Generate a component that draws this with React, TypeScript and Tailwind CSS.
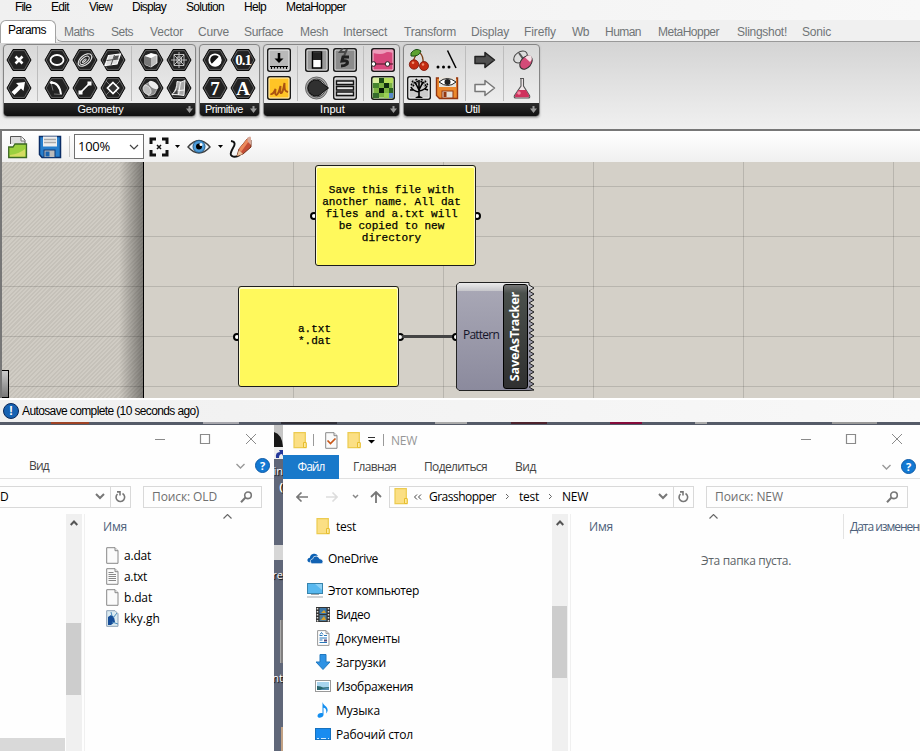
import { useLayoutEffect, useRef, type ReactNode } from "react";

/* Text run whose letter spacing is adjusted so that it takes the given width. */
function Fit({ w, children, className = "" }: { w: number; children: string; className?: string }) {
  const ref = useRef<HTMLSpanElement>(null);
  useLayoutEffect(() => {
    const el = ref.current;
    if (!el) return;
    el.style.letterSpacing = "0px";
    const natural = el.getBoundingClientRect().width;
    el.style.letterSpacing = `${(w - natural) / children.length}px`;
  }, [w, children]);
  return (
    <span ref={ref} className={`inline-block shrink-0 whitespace-pre ${className}`}>
      {children}
    </span>
  );
}

const menu: [string, number][] = [
  ["File", 16], ["Edit", 18], ["View", 23], ["Display", 34], ["Solution", 38], ["Help", 22], ["MetaHopper", 60],
];

const tabs: [string, number, string][] = [
  ["Maths", 30, "ml-2"], ["Sets", 22, "ml-[17px]"], ["Vector", 33, "ml-[17px]"], ["Curve", 31, "ml-[15px]"],
  ["Surface", 39, "ml-[15px]"], ["Mesh", 28, "ml-[17px]"], ["Intersect", 44, "ml-[15px]"],
  ["Transform", 52, "ml-[17px]"], ["Display", 38, "ml-[15px]"], ["Firefly", 32, "ml-[15px]"],
  ["Wb", 17, "ml-4"], ["Human", 36, "ml-4"], ["MetaHopper", 61, "ml-[17px]"], ["Slingshot!", 50, "ml-[18px]"],
  ["Sonic", 29, "ml-[15px]"],
];

function Hex({ children }: { children?: ReactNode }) {
  return (
    <svg width="26" height="24" viewBox="0 0 26 24">
      <path d="M7 1.500h12L25 12l-6 10.500H7L1 12z" fill="#222" stroke="#0a0a0a" strokeWidth="1" />
      <path d="M7.600 2.600h10.800L23.800 12l-5.400 9.400H7.600L2.200 12z" fill="none" stroke="#777" strokeWidth=".7" />
      {children}
    </svg>
  );
}

function Tile({ fill = "#b9b9b9", children }: { fill?: string; children?: ReactNode }) {
  return (
    <svg width="24" height="24" viewBox="0 0 24 24">
      <rect x=".75" y=".75" width="22.500" height="22.500" rx="2" fill={fill} stroke="#1a1a1a" strokeWidth="1.500" />
      <rect x="2" y="2" width="20" height="20" rx="1" fill="none" stroke="#fff" strokeOpacity=".7" strokeWidth="1" />
      {children}
    </svg>
  );
}

const hexCross = <Hex><path d="M9.500 8.500l7 7m0-7l-7 7" stroke="#fff" strokeWidth="2.600" /></Hex>;
const hexArrow = <Hex><path d="M7 17.500l-1.500-1.500 7-6.500-2.500-2.500 9-1-1.500 9-2.500-2.500-6.500 6.500z" fill="#fff" /></Hex>;
const hexCircle = <Hex><ellipse cx="13" cy="12" rx="6.500" ry="5" fill="none" stroke="#fff" strokeWidth="1.800" /></Hex>;
const hexArc = <Hex><path d="M7 6.500c5 0 9 4 10 12" fill="none" stroke="#fff" strokeWidth="2" /><path d="M7 6.500l2 8M10 18l7 .5" stroke="#888" strokeWidth=".8" /><circle cx="7.500" cy="6.500" r="1.500" fill="#fff" /></Hex>;
const hexSpiral = (
  <Hex>
    <g transform="rotate(-40 13 12)" fill="none" stroke="#ddd">
      <ellipse cx="13" cy="12" rx="8" ry="4.600" strokeWidth="1.200" />
      <ellipse cx="12.500" cy="12" rx="5.500" ry="2.700" strokeWidth="1" />
      <ellipse cx="12" cy="12" rx="2.500" ry=".8" />
    </g>
  </Hex>
);
const hexLine = <Hex><path d="M9 16l8-8" stroke="#fff" strokeWidth="1.700" /><rect x="6.500" y="14.500" width="4" height="4" fill="#fff" /><rect x="15.500" y="5.500" width="4" height="4" fill="#fff" /></Hex>;
const hexPlane = <Hex><path d="M8.500 7.500l12-1.500-3.500 10-12 1.500z" fill="#ddd" stroke="#fff" strokeWidth="1.200" /><path d="M6.500 12.500l12-1.500M14.500 7l-3.500 10" stroke="#555" strokeWidth="1" /><path d="M14.500 8l4.500-.6-1.200 3.400-4.600.6z" fill="#555" /></Hex>;
const hexRect = <Hex><path d="M6 5l14 14M20 5L6 19" stroke="#888" strokeWidth=".9" /><path d="M13 6.500l5.500 5.500-5.500 5.500L7.500 12z" fill="#333" stroke="#fff" strokeWidth="1.700" /></Hex>;
const hexBox = <Hex><path d="M7 8l6-2.500 6 1.500v8l-6 4-6-2.500z" fill="#bbb" stroke="#fff" strokeWidth=".8" /><path d="M7 8l6 2v9l-6-2.500z" fill="#777" /><path d="M7 8l6-2.500 6 1.500-6 3z" fill="#fff" /></Hex>;
const hexMesh = <Hex><path d="M13 4v16M5 12h16M8 7l10 10M18 7L8 17M8 6.500h10v11H8zM11 9h4.500v6H11z" fill="none" stroke="#ccc" strokeWidth=".9" /></Hex>;
const hexCylinder = <Hex><path d="M6 9.500l7-4.500 7 6-3.500 7-6 2z" fill="#888" stroke="#ddd" strokeWidth=".7" /><ellipse cx="15.500" cy="9" rx="5.500" ry="3" transform="rotate(35 15.500 9)" fill="#eee" /><ellipse cx="9" cy="14" rx="3.500" ry="5" transform="rotate(-35 9 14)" fill="#bbb" stroke="#fff" strokeWidth=".6" /></Hex>;
const hexSurface = <Hex><path d="M11 5.500q4 1.500 8-1l-1 15q-6-1-12-1 5-5 5-13z" fill="#aaa" stroke="#fff" strokeWidth=".9" /><path d="M9 14q5 1 9.500 0M14.500 6l-2 13" stroke="#fff" strokeWidth=".9" fill="none" /><path d="M7 18q4-3 4.500-7v7z" fill="#444" /></Hex>;
const hexBool = <Hex><circle cx="13" cy="12" r="5.700" fill="#111" stroke="#fff" strokeWidth="1.800" /><path d="M17.500 8a6 6 0 01-8.700 8.700z" fill="#fff" /></Hex>;

function HexText({ children, small }: { children: string; small?: boolean }) {
  return (
    <div className="grid place-items-center">
      <div className="col-start-1 row-start-1"><Hex /></div>
      <span
        className={`z-10 col-start-1 row-start-1 font-['Liberation_Serif',serif] font-bold leading-none text-white ${small ? "text-[15px] tracking-[-1px]" : "text-[19px]"}`}
      >
        {children}
      </span>
    </div>
  );
}

const tImport = <Tile><path d="M12 5v6" stroke="#000" strokeWidth="2.500" /><path d="M7.500 10.500h9L12 15z" fill="#000" /><path d="M3 18.500h18M4.500 18v3M7.500 18v2.500M10.500 18v2.500M13.500 18v2.500M16.500 18v2.500M19.500 18v3" stroke="#000" strokeWidth="1" /></Tile>;
const tGraph = <Tile fill="#ffc426"><path d="M3.500 18c3 1 4-3 5-5 0 3-1 6 1 6 2-1 3-5 4-9 0 4-1 8 1 7 2-2 2-6 3-10 0 5-.5 8 3.500 9" fill="none" stroke="#aa5312" strokeWidth="1.900" /></Tile>;
const tToggle = <Tile fill="#999"><rect x="7.500" y="4" width="9" height="16" fill="#fff" stroke="#000" strokeWidth="1.500" /><rect x="8" y="4.500" width="8" height="7.500" fill="#222" /></Tile>;
const tKnob = (
  <svg width="26" height="24" viewBox="0 0 26 24">
    <circle cx="12.500" cy="12" r="11" fill="#aaa" stroke="#666" />
    <circle cx="12.500" cy="12" r="9" fill="#ccc" stroke="#444" />
    <path d="M24.500 12l-5.500 4a8 8 0 110-8z" fill="#303030" stroke="#111" />
  </svg>
);
const tScroller = <Tile fill="#8c8c8c"><path d="M10 0l-3 4h6M14 1l-3 7" fill="none" stroke="#4a4a4a" strokeWidth="2" /><path d="M16 9H10l-1 4q7-1 5 3-2 2-6 2" fill="none" stroke="#202020" strokeWidth="3" /></Tile>;
const tPanel = <Tile fill="#bdbdbd"><path d="M3.500 5h17v3.500h-17zM3.500 10.500h17V14h-17zM3.500 16h17v3.500h-17z" fill="#e5e5e5" stroke="#111" strokeWidth="1.400" /></Tile>;
const tGradient = <Tile fill="#d8487c"><path d="M2 2h20v3q-6-2-8 0-4 2-12 0z" fill="#ed9cba" /><path d="M2 16h20" stroke="#461525" strokeWidth="1.200" /><circle cx="2.500" cy="16" r="2.300" fill="#fff" stroke="#222" /><circle cx="16.500" cy="16" r="2.300" fill="#fff" stroke="#222" /></Tile>;
const tPixels = (
  <Tile fill="#7bb342">
    <rect x="2" y="2" width="6" height="5" fill="#d9efa0" />
    <rect x="8" y="2" width="5" height="5" fill="#1d4c16" />
    <rect x="13" y="2" width="9" height="5" fill="#b6df5c" />
    <rect x="2" y="7" width="6" height="5" fill="#46852f" />
    <rect x="13" y="7" width="5" height="5" fill="#102f10" />
    <rect x="8" y="12" width="5" height="5" fill="#061906" />
    <rect x="18" y="12" width="4" height="5" fill="#2b671f" />
    <rect x="2" y="17" width="6" height="5" fill="#356b2c" />
    <rect x="13" y="17" width="5" height="5" fill="#9cd155" />
    <rect x="18" y="17" width="4" height="5" fill="#5888c8" />
  </Tile>
);
const uCherry = (
  <svg width="24" height="24" viewBox="0 0 24 24">
    <path d="M6 15Q7 8 12 4q5 4 4 12" fill="none" stroke="#7b3f16" strokeWidth="1.300" />
    <path d="M4 5q5-6 10-2-2 6-10 5z" fill="#5ca231" stroke="#184c13" />
    <circle cx="7" cy="16.500" r="4.700" fill="#c42c13" stroke="#761408" strokeWidth=".8" /><circle cx="17" cy="18" r="4.500" fill="#c42c13" stroke="#761408" strokeWidth=".8" />
    <circle cx="6" cy="14.800" r="1.300" fill="#f09070" /><circle cx="16" cy="16.500" r="1.200" fill="#f09070" />
  </svg>
);
const uDots = <svg width="24" height="24" viewBox="0 0 24 24"><circle cx="3" cy="19" r="1.500" /><circle cx="8.500" cy="19" r="1.500" /><circle cx="14" cy="19" r="1.500" /><path d="M12.500 2.500L21 20" stroke="#000" strokeWidth="1.500" /></svg>;
const uTree = (
  <Tile fill="#ccc">
    <path d="M12 22v-8M12 16Q6 15 4 11M12 15q6-1 8-5M12 14L8 6M12 14l4-8M12 14V4M6 14L3 14M18 13l3 1" fill="none" stroke="#000" strokeWidth="1.600" />
    <path d="M4 8l3 2M5 5l4 3M9 3l2 4M15 3l-1 4M19 5l-4 3M21 8l-4 2" stroke="#000" strokeWidth="2" strokeDasharray="1.500 .6" />
    <path d="M8 22q4-4 8 0z" />
  </Tile>
);
const uEyeDisk = (
  <svg width="24" height="24" viewBox="0 0 24 24">
    <path d="M1.500 2h21v20.500h-18l-3-3z" fill="#ec892d" stroke="#943611" strokeWidth="1.400" />
    <rect x="4" y="1" width="17" height="10" fill="#e8e4de" /><path d="M4 6q8-7 17 0-8 7-17 0z" fill="#fff" stroke="#222" /><circle cx="12.500" cy="6" r="3" fill="#222" />
    <rect x="7" y="15" width="11" height="7" fill="#e5ded7" stroke="#943611" /><rect x="8.500" y="16" width="3" height="5" fill="#943611" />
  </svg>
);
const uArrow = (fill: string, stroke: string) => (
  <svg width="24" height="24" viewBox="0 0 24 24"><path d="M2 8.500h10V4.500l9.500 7.500-9.500 7.500v-4H2z" fill={fill} stroke={stroke} strokeWidth="1.500" strokeLinejoin="round" /></svg>
);
const uPills = (
  <svg width="24" height="24" viewBox="0 0 24 24">
    <ellipse cx="9.500" cy="9" rx="7.500" ry="5" transform="rotate(-35 9.500 9)" fill="#ddd" stroke="#444" />
    <path d="M8 5l5 7" stroke="#555" strokeWidth="2" />
    <ellipse cx="15" cy="14.500" rx="7.500" ry="5.200" transform="rotate(-50 15 14.500)" fill="#d34b78" stroke="#333" />
    <path d="M14 9.500q4-4 6.500-1 1 3-1.500 5.500z" fill="#f7dfe5" />
  </svg>
);
const uFlask = (
  <svg width="24" height="24" viewBox="0 0 24 24">
    <path d="M9 2.500h4M10 3v7L3.500 19.500q-1 2.500 1.500 2.500h12q2.500 0 1.500-2.500L12.500 10V3" fill="#f1e7e9" stroke="#555" strokeWidth="1.100" />
    <path d="M7.500 14h7.500l3 5.500q.5 1.700-1 1.700H5q-1.700 0-1-1.700z" fill="#cf315d" /><circle cx="8" cy="17" r="1.800" fill="#f48aa3" />
  </svg>
);

type Pair = [ReactNode, ReactNode];
const groups: { name: string; w: number; cols: (Pair | null)[]; cls: string }[] = [
  {
    name: "Geometry", w: 46, cls: "w-[193px]",
    cols: [[hexCross, hexArrow], null, [hexCircle, hexArc], [hexSpiral, hexLine], [hexPlane, hexRect], null, [hexBox, hexCylinder], [hexMesh, hexSurface]],
  },
  {
    name: "Primitive", w: 38, cls: "w-[61px]",
    cols: [[hexBool, <HexText>7</HexText>], [<HexText small>0.1</HexText>, <HexText>A</HexText>]],
  },
  { name: "Input", w: 25, cls: "w-[137px]", cols: [[tImport, tGraph], null, [tToggle, tKnob], [tScroller, tPanel], null, [tGradient, tPixels]] },
  {
    name: "Util", w: 15, cls: "w-[137px]",
    cols: [[uCherry, uTree], [uDots, uEyeDisk], null, [uArrow("#505050", "#222"), uArrow("#f4f4f4", "#777")], null, [uPills, uFlask]],
  },
];

function Ribbon() {
  return (
    <div className="flex h-[87px] gap-[3px] bg-linear-to-b from-[#d4d4d4] to-[#f0f0f0] pl-[3px] pt-0.5">
      {groups.map((g) => (
        <div key={g.name} className={`flex h-[73px] flex-col overflow-hidden rounded-[4px] border border-[#858585] bg-linear-to-b from-[#d8d8d8] to-[#f2f2f2] shadow-[0_1px_2px_#aaa] ${g.cls}`}>
          <div className="flex h-[58px] shrink-0 pl-px pt-px">
            {g.cols.map((c, i) =>
              c ? (
                <div key={i} className="w-7 shrink-0">
                  <div className="flex h-7 items-center justify-center">{c[0]}</div>
                  <div className="flex h-7 items-center justify-center">{c[1]}</div>
                </div>
              ) : (
                <div key={i} className="flex w-2.5 shrink-0 pl-1"><div className="h-[55px] w-px bg-[#bdbdbd]" /></div>
              ),
            )}
          </div>
          <div className="-mx-px flex flex-1 items-center bg-linear-to-b from-[#2c2c2c] to-[#101010] text-[11px] leading-none text-white">
            <div className={`flex flex-1 ${g.name === "Primitive" ? "pl-1.5" : "justify-center pl-3"}`}><Fit w={g.w}>{g.name}</Fit></div>
            <svg width="7" height="7" className="mr-[3px] shrink-0"><path d="M2.500 0h2v2.500H7L3.500 7 0 2.500h2.500z" fill="#999" /></svg>
          </div>
        </div>
      ))}
    </div>
  );
}

function Toolbar() {
  return (
    <div className="flex h-[31px] items-center bg-linear-to-b from-white to-[#f0f0f0]">
      <svg width="20" height="24" viewBox="0 0 20 24" className="ml-1.5">
        <path d="M2.500 9V1.500H13l4 3.500V9" fill="#ddd" stroke="#555" /><path d="M13 1.500V6h4" fill="#fff" stroke="#777" />
        <path d="M.7 12H5l2-3h11.500v13.500H.7z" fill="#9bd03f" stroke="#3d6924" strokeWidth="1.300" /><path d="M2 20q9-1 15-6v7.500H2z" fill="#d5dc62" />
      </svg>
      <svg width="24" height="24" viewBox="0 0 24 24" className="ml-2.5">
        <path d="M1.500 1.500h21v21H4l-2.500-3z" fill="#277fcd" stroke="#0b2d66" strokeWidth="1.500" />
        <rect x="5" y="1.500" width="14" height="10" fill="#eee" /><path d="M6 4.500h12M6 7.500h12" stroke="#aaa" strokeWidth="1.500" />
        <rect x="6" y="15" width="11" height="7.500" fill="#bbb" stroke="#123a75" /><rect x="7.500" y="16.500" width="4" height="5" fill="#1b64b0" />
      </svg>
      <div className="ml-[7px] h-[21px] w-px bg-[#c8c8c8]" />
      <div className="ml-1 flex h-[25px] w-[70px] items-center justify-between border border-[#707070] bg-white pl-[3px] pr-1 text-[13px]">
        <Fit w={32} className="font-['Open_Sans',sans-serif]">100%</Fit>
        <svg width="10" height="6" fill="none" stroke="#444" strokeWidth="1.200"><path d="M1 1l4 4 4-4" /></svg>
      </div>
      <svg width="20" height="20" viewBox="0 0 20 20" className="ml-[5px]">
        <path d="M2 7V2h5M13 2h5v5M18 13v5h-5M7 18H2v-5" fill="none" stroke="#111" strokeWidth="3" /><path d="M8 8l4 4m0-4l-4 4" stroke="#111" strokeWidth="1.500" />
      </svg>
      <svg width="5" height="3" className="ml-1.5"><path d="M0 0h5L2.500 3z" /></svg>
      <svg width="24" height="18" viewBox="0 0 24 18" className="ml-[7px] mt-px">
        <path d="M1 9Q12-4 23 9 12 21 1 9z" fill="#eef5fa" stroke="#3f3f3f" strokeWidth="1.400" /><circle cx="12" cy="8.500" r="6" fill="#4d9ddb" stroke="#235984" /><circle cx="12" cy="8.500" r="3" /><circle cx="14" cy="6.500" r="1.500" fill="#fff" />
      </svg>
      <svg width="5" height="3" className="ml-[7px]"><path d="M0 0h5L2.500 3z" /></svg>
      <svg width="24" height="24" viewBox="0 0 24 24" className="ml-1.5">
        <path d="M2 6q6 1 2 7-4 7-1 8 3 2 8-1" fill="none" stroke="#111" strokeWidth="1.900" />
        <path d="M10 14L19 3l3 2v7l-8 7-6 2z" fill="#c44e36" stroke="#713019" /><path d="M10 14L18 4l2 2-8 11z" fill="#ec895b" /><path d="M18 3q4-3 4 0v7l-3-3z" fill="#d8a898" /><path d="M8 21l2-6 4 4z" fill="#eac19a" />
      </svg>
    </div>
  );
}

function Port({ cls }: { cls: string }) {
  return <div className={`absolute size-2 rounded-full border-2 border-black bg-white ${cls}`} />;
}

const zigzag = Array.from({ length: 18 }, (_, i) => `L${73} ${3 + i * 6}L${78} ${6 + i * 6}`).join("");

function Canvas() {
  return (
    <div className="relative h-[236px] overflow-hidden bg-[#d4d0c8]">
      <div className="flex h-full w-[142px] border-r border-black bg-[repeating-linear-gradient(135deg,#c5c1b9_0px,#c5c1b9_1.500px,#d0ccc4_1.500px,#d0ccc4_3px)]">
        <div className="ml-auto h-full w-6 bg-linear-to-r from-transparent to-black/40" />
      </div>
      <svg className="absolute inset-0" width="918" height="236">
        <path d="M0 24.500h918M0 74.500h918M0 124.500h918M0 174.500h918M0 224.500h918M291.500 0v236M441.500 0v236M591.500 0v236M741.500 0v236M891.500 0v236" stroke="#000" strokeOpacity=".13" fill="none" />
      </svg>
      <div className="absolute -left-px top-[208px] h-7 w-2 border border-black bg-linear-to-b from-[#ccc] to-[#777]" />

      <Port cls="left-[308px] top-[50px]" />
      <Port cls="left-[471px] top-[50px]" />
      <div className="absolute left-[313px] top-[3px] h-[101px] w-[161px] rounded-[3px] border border-[#1c1c1c] bg-[#fff95c] pr-2 pt-[18px] text-center font-['Liberation_Mono',monospace] text-[11px] leading-3 text-black [-webkit-text-stroke:0.25px_#000] shadow-[inset_0_1px_0_1px_#fffcc8]">
        Save this file with<br />another name. All dat<br />files and a.txt will<br />be copied to new<br />directory
      </div>

      <Port cls="left-[231px] top-[171px]" />
      <Port cls="left-[394px] top-[171px]" />
      <div className="absolute left-[400px] top-[173px] h-[3px] w-[52px] bg-[#444]" />
      <Port cls="left-[450px] top-[171px]" />
      <div className="absolute left-[236px] top-[124px] h-[101px] w-[161px] rounded-[3px] border border-[#1c1c1c] bg-[#fff95c] pr-2 pt-9 text-center font-['Liberation_Mono',monospace] text-[11px] leading-3 text-black [-webkit-text-stroke:0.25px_#000] shadow-[inset_0_1px_0_1px_#fffcc8]">
        a.txt<br />*.dat
      </div>

      <div className="absolute left-[454px] top-[120px] flex h-[109px] w-20">
        <svg className="absolute inset-0" width="80" height="109" viewBox="0 0 80 109">
          <defs>
            <linearGradient id="comp" x1="0" y1="0" x2="0" y2="1">
              <stop offset="0" stopColor="#eee" /><stop offset=".075" stopColor="#c8c8cc" /><stop offset=".076" stopColor="#a8a7b5" /><stop offset="1" stopColor="#8b8a9d" />
            </linearGradient>
          </defs>
          <path d={`M3 .5H73${zigzag}L73 108.500H3L.5 106V3z`} fill="url(#comp)" stroke="#222" />
        </svg>
        <div className="relative flex w-12 items-center justify-end pr-[5px] pb-1 font-['Open_Sans',sans-serif] text-[12px] text-[#15152a]"><Fit w={36}>Pattern</Fit></div>
        <div className="relative ml-[-1px] mt-0.5 flex h-[105px] w-[25px] items-center justify-center rounded-[3px] border border-black bg-linear-to-b from-[#777] via-[#4a504c] via-8% to-[#303030]">
          <span className="rotate-180 whitespace-pre font-['Noto_Sans',sans-serif] text-[12.500px] font-bold leading-none tracking-[-0.1px] text-white [writing-mode:vertical-rl]">SaveAsTracker</span>
        </div>
      </div>
    </div>
  );
}

function Folder() {
  return <svg width="14" height="17" viewBox="0 0 14 17" className="shrink-0"><path d="M1 .7h11.300v11H13v4H1z" fill="#fbdf84" stroke="#eccb50" strokeWidth="1.200" /><path d="M10.500 15.500v-5h2.700v5z" fill="#fdeaa0" stroke="#e7bd2d" /></svg>;
}

function WindowButtons() {
  return (
    <svg width="102" height="12" viewBox="0 0 102 12" fill="none" stroke="#8a8a8a">
      <path d="M0 6.500h10" /><path d="M45.500 1.500h9v9h-9z" strokeWidth="1.200" /><path d="M91 1l10 10M101 1L91 11" />
    </svg>
  );
}

function RibbonEnd() {
  return (
    <div className="flex items-center gap-[10px]">
      <svg width="9" height="6" fill="none" stroke="#999" strokeWidth="1.400"><path d="M.5 1l4 4 4-4" /></svg>
      <div className="flex size-[15px] items-center justify-center rounded-full border border-[#0e5aa7] bg-[#1379d3] text-[11px] font-bold leading-none text-white">?</div>
    </div>
  );
}

function AddressEnd() {
  return (
    <div className="ml-auto flex h-full items-center">
      <svg width="10" height="7" className="mr-[5px]" fill="none" stroke="#777" strokeWidth="2"><path d="M1 1l4 4 4-4" /></svg>
      <div className="flex h-full w-5 items-center justify-center border-l border-[#d9d9d9]">
        <svg width="11" height="12" viewBox="0 0 11 12" fill="none" stroke="#777" strokeWidth="1.600"><path d="M7.500 2.500A4.300 4.300 0 112.500 3" /><path d="M2 .9h3v3.600" /></svg>
      </div>
    </div>
  );
}

function Search({ text, w, cls }: { text: string; w: number; cls: string }) {
  return (
    <div className={`flex h-[22px] items-center justify-between border border-[#d9d9d9] pl-2 pr-2 text-[#6f6f6f] ${cls}`}>
      <Fit w={w}>{text}</Fit>
      <svg width="13" height="12" viewBox="0 0 13 12" fill="none" stroke="#777" strokeWidth="1.600"><circle cx="8" cy="4.300" r="3.300" /><path d="M5.500 6.500L1 11.300" strokeWidth="2" /></svg>
    </div>
  );
}

function Scrollbar() {
  return (
    <div className="flex w-4 shrink-0 flex-col items-center bg-[#f0f0f0]">
      <svg width="8" height="6" className="mt-[6px]" fill="none" stroke="#555" strokeWidth="2"><path d="M.7 5L4 1.500 7.300 5" /></svg>
    </div>
  );
}

const sortCaret = <svg width="9" height="5" fill="none" stroke="#666" strokeWidth="1.100"><path d="M.5 4.500l4-4 4 4" /></svg>;

function Page({ lines }: { lines?: boolean }) {
  return (
    <svg width="13" height="17" viewBox="0 0 13 17"><path d="M.7.7h8.300l3 3v12.600H.7z" fill="#fbfbfb" stroke="#888" /><path d="M9 .7v3h3" fill="#eee" stroke="#888" />
      {lines && <path d="M2.500 4.500h5M2.500 6.500h7.500M2.500 8.500h7.500M2.500 10.500h7.500M2.500 12.500h7.500" stroke="#888" />}
    </svg>
  );
}
const ghFile = <svg width="13" height="17" viewBox="0 0 13 17"><path d="M.7.7h8.300l3 3v12.600H.7z" fill="#dcebf1" stroke="#8da0b5" /><path d="M2 7l3-2 3 2 1 5-4 3H2z" fill="#164d98" /><path d="M7 8l4-5M6 6L5 2M6 12l6 2" stroke="#4b8bbd" /></svg>;

function OldWindow() {
  const files: [string, number, ReactNode][] = [["a.dat", 27, <Page />], ["a.txt", 23, <Page lines />], ["b.dat", 28, <Page />], ["kky.gh", 36, ghFile]];
  return (
    <div className="flex w-[274px] shrink-0 flex-col bg-[#fefefe]">
      <div className="flex h-7 items-center justify-end pr-[17px]"><WindowButtons /></div>
      <div className="flex h-[26px] items-center justify-between border-b border-[#e1e1e1] pl-[29px] pr-1 text-[#444]"><Fit w={20}>Вид</Fit><RibbonEnd /></div>
      <div className="flex h-[35px] items-center">
        <div className="flex h-[22px] w-[131px] items-center border border-l-0 border-[#d9d9d9]"><Fit w={8}>D</Fit><AddressEnd /></div>
        <Search text="Поиск: OLD" w={65} cls="ml-3 w-[119px]" />
      </div>
      <div className="flex flex-1">
        <div className="flex w-[66px] items-end"><div className="h-[13px] w-[65px] bg-[#d9d9d9]" /></div>
        <div className="grid">
          <div className="col-start-1 row-start-1 flex"><Scrollbar /></div>
          <div className="z-10 col-start-1 row-start-1 mt-[109px] h-[72px] w-[15px] bg-[#cdcdcd]" />
        </div>
        <div className="ml-0.5 flex-1 border-l border-[#f0f0f0]">
          <div className="flex h-[25px] pl-[18px] text-[#4c607a]"><div className="flex items-center"><Fit w={24}>Имя</Fit></div><div className="ml-24">{sortCaret}</div></div>
          <div className="flex flex-col pl-[21px] pt-1.5">
            {files.map(([n, w, icon]) => <div key={n} className="flex h-[21px] items-center gap-[5px]">{icon}<Fit w={w}>{n}</Fit></div>)}
          </div>
        </div>
      </div>
    </div>
  );
}

const oneDrive = <svg width="17" height="11" viewBox="0 0 17 11"><path d="M3.500 9.500Q0 9.500.5 6.500 1 5 3 4.700 3.500 1 7 .5q3-.5 4.500 2" fill="#0c61b4" /><path d="M6 11Q3 11 3.500 8q.5-2 2.500-2 .5-3.500 4-3 2.500.2 3.300 2.700Q17 6 17 9q0 2-2 2z" fill="#1262b3" stroke="#fff" strokeWidth=".7" /></svg>;
const computer = <svg width="16" height="16" viewBox="0 0 16 16"><rect x=".5" y="1.500" width="15" height="10" fill="#58b8ef" stroke="#3884ac" /><path d="M8 2h7v6z" fill="#8ed1f5" /><path d="M4 12.500h8M0 15h16" stroke="#a3a7ab" /></svg>;
const video = <svg width="14" height="15" viewBox="0 0 14 15"><rect width="14" height="15" fill="#333" /><path d="M1.500 1v14M12.500 1v14" stroke="#ddd" strokeWidth="1.500" strokeDasharray="1.500 1.500" /><rect x="3.500" y="1" width="7" height="6" fill="#3c77a8" /><rect x="3.500" y="8" width="7" height="6" fill="#4f7c9a" /><path d="M5 6l3-3 2 3zM5 13l3-4 2 4z" fill="#d8a02a" /></svg>;
const docs = <svg width="13" height="16" viewBox="0 0 13 16"><path d="M.6.6H9l3 3v11.800H.6z" fill="#fff" stroke="#999" /><path d="M9 .6v3h3" fill="none" stroke="#999" /><path d="M2.500 5.500h3M7 5.500h3M2.500 8h7.500M2.500 10h3M2.500 12.500h7.500" stroke="#2777b9" /><path d="M3 4.500l1.500-2 1.500 2" stroke="#2777b9" fill="none" /><rect x="7" y="9.500" width="3" height="2" fill="#547" /></svg>;
const download = <svg width="16" height="16" viewBox="0 0 16 16"><path d="M5 .5h6V8h4l-7 7.500L1 8h4z" fill="#2e92e4" stroke="#2178bf" /></svg>;
const picture = <svg width="16" height="12" viewBox="0 0 16 12"><rect x=".5" y=".5" width="15" height="11" fill="#fff" stroke="#999" /><rect x="2" y="2" width="12" height="8" fill="#a8d4ee" /><path d="M2 6q4 0 6 1.500l6-.5v3H2z" fill="#28666d" /><path d="M7 9l7-1.500V10H5z" fill="#518cb1" /></svg>;
const music = <svg width="12" height="16" viewBox="0 0 12 16"><path d="M5.500 0c1 4 6 4.500 5 9-.5 1.500-1 2-1.500 2.500 1-3.500-.5-5.500-2.500-5.800V13c-.5 3-6 4-6 1 0-2.500 3-3.500 5-2.700z" fill="#138ef0" /></svg>;
const desktop = <svg width="16" height="12" viewBox="0 0 16 12"><rect x=".5" y=".5" width="15" height="11" fill="#198cf0" stroke="#1771bd" /><path d="M2 10.500h2m9 0h1M6 10.500h5" stroke="#d2ebff" /></svg>;

function NewWindow() {
  const tree: [string, number, ReactNode, number][] = [
    ["test", 20, <Folder />, 1], ["OneDrive", 50, oneDrive, 0], ["Этот компьютер", 91, computer, 0],
    ["Видео", 34, video, 1], ["Документы", 64, docs, 1], ["Загрузки", 50, download, 1],
    ["Изображения", 77, picture, 1], ["Музыка", 44, music, 1], ["Рабочий стол", 77, desktop, 1],
  ];
  return (
    <div className="flex min-w-0 flex-1 flex-col bg-[#fefefe]">
      <div className="flex h-[30px] items-center justify-between pl-2.5 pr-[17px]">
        <div className="flex items-center">
          <Folder /><div className="ml-[6px] h-3 w-px bg-[#999]" />
          <svg width="13" height="17" viewBox="0 0 13 17" className="ml-[11px]"><path d="M.7.7h8.300l3 3v12.600H.7z" fill="#fafafa" stroke="#888" /><path d="M9 .7v3h3" fill="#eee" stroke="#888" /><path d="M2.500 8.500l3 3 5-5" fill="none" stroke="#c95719" strokeWidth="1.700" /></svg>
          <div className="ml-[9px] flex"><Folder /></div>
          <svg width="7" height="7" className="ml-[7px]"><path d="M0 .5h7" stroke="#333" /><path d="M0 3h7L3.500 6.500z" /></svg>
          <div className="ml-2 h-3 w-px bg-[#999]" />
          <Fit w={26} className="ml-[7px] text-[#969696]">NEW</Fit>
        </div>
        <div className="flex pb-0.5"><WindowButtons /></div>
      </div>
      <div className="flex h-6 items-center border-b border-[#e1e1e1] pr-1 text-[#444]">
        <div className="flex h-6 w-14 items-center justify-center bg-[#1979ca] text-white"><Fit w={27}>Файл</Fit></div>
        <Fit w={43} className="ml-[14px]">Главная</Fit><Fit w={63} className="ml-[28px]">Поделиться</Fit><Fit w={21} className="ml-[28px]">Вид</Fit>
        <div className="ml-auto"><RibbonEnd /></div>
      </div>
      <div className="flex h-[35px] items-center pl-[13px]">
        <svg width="12" height="10" fill="none" stroke="#777" strokeWidth="1.600"><path d="M5.500.5L1 5l4.500 4.500M1 5h11" /></svg>
        <svg width="12" height="10" className="ml-[18px]" fill="none" stroke="#ddd" strokeWidth="1.600"><path d="M6.500.5L11 5 6.500 9.500M0 5h11" /></svg>
        <svg width="7" height="5" className="ml-[14px]" fill="none" stroke="#888" strokeWidth="1.500"><path d="M1 1l2.500 2.500L6 1" /></svg>
        <svg width="12" height="12" className="ml-[11px]" fill="none" stroke="#777" strokeWidth="1.800"><path d="M1 6l5-5 5 5M6 1v11" /></svg>
        <div className="ml-[7px] flex h-[22px] w-[305px] items-center border border-[#d9d9d9] pl-1">
          <Folder />
          <svg width="9" height="6" className="ml-[5px]" fill="none" stroke="#444"><path d="M4 .5L1.500 3 4 5.500M8 .5L5.500 3 8 5.500" /></svg>
          <Fit w={67} className="ml-[7px]">Grasshopper</Fit>
          <svg width="5" height="7" className="ml-[9px]" fill="none" stroke="#666"><path d="M1 1l2.500 2.500L1 6" /></svg>
          <Fit w={20} className="ml-[9px]">test</Fit>
          <svg width="5" height="7" className="ml-[9px]" fill="none" stroke="#666"><path d="M1 1l2.500 2.500L1 6" /></svg>
          <Fit w={26} className="ml-[9px]">NEW</Fit>
          <AddressEnd />
        </div>
        <Search text="Поиск: NEW" w={68} cls="ml-3 w-[202px]" />
      </div>
      <div className="flex flex-1">
        <div className="w-[269px] shrink-0">
          {tree.map(([n, w, icon, depth], i) => (
            <div key={n} className={`flex h-6 items-center gap-[5px] ${depth ? "pl-8" : "pl-6"} ${i === 1 || i === 2 ? "mt-2" : ""}`}>
              <div className="flex w-4 justify-center">{icon}</div><Fit w={w}>{n}</Fit>
            </div>
          ))}
        </div>
        <div className="grid">
          <div className="col-start-1 row-start-1 flex"><Scrollbar /></div>
          <div className="z-10 col-start-1 row-start-1 mt-[92px] h-[72px] w-[15px] bg-[#cdcdcd]" />
        </div>
        <div className="ml-0.5 min-w-0 flex-1 overflow-hidden border-l border-[#f0f0f0]">
          <div className="flex h-[25px] pl-[18px] text-[#4c607a]">
            <div className="flex items-center"><Fit w={24}>Имя</Fit></div><div className="ml-24">{sortCaret}</div>
            <div className="ml-[125px] flex items-center border-l border-[#e3e3e3] pl-1.5"><Fit w={81}>Дата изменения</Fit></div>
          </div>
          <Fit w={90} className="ml-[130px] mt-3.5 text-[#5d6468]">Эта папка пуста.</Fit>
        </div>
      </div>
    </div>
  );
}

/* Sliver of the desktop seen between the two windows, with clipped icon captions. */
function DesktopGap() {
  const cap = "flex h-4 w-[9px] items-center justify-end overflow-hidden whitespace-pre text-[11px] text-white [text-shadow:1px_1px_1px_#000]";
  return (
    <div className="flex w-[9px] shrink-0 flex-col overflow-hidden bg-[#606779]">
      <svg width="9" height="38"><rect width="9" height="22" fill="#c5c5c5" /><path d="M0 7q8 2 9 15H0z" fill="#171717" /><path d="M0 22h9v12H0z" fill="#eee" /><path d="M2 33q-1-6 4-6l-1-2h4v6l-1-2q-3 0-3 4z" fill="#24389b" /></svg>
      <div className={cap}>nin</div>
      <div className={`${cap} font-bold`}>(</div>
      <div className="mt-[51px] h-[15px] bg-[#d6d6d6]" />
      <div className={`${cap} mt-1.5`}>re</div>
      <div className="ml-1.5 mt-[38px] h-[44px] w-[3px] border-l border-[#aaa] bg-[#817f7f]" />
      <div className={`${cap} mt-1.5`}>nt</div>
      <div className="ml-[7px] mt-[42px] h-6 w-0.5 bg-[#c1a184]" />
    </div>
  );
}

export default function App() {
  return (
    <div className="flex h-[751px] w-[920px] flex-col overflow-hidden bg-[#f0f0f0] font-['Liberation_Sans',sans-serif] text-[12px] leading-[15px] text-black">
      <div className="flex h-5 gap-5 bg-linear-to-r from-[#f0f0f0] to-[#f8f8f8] pl-[15px]">
        {menu.map(([n, w]) => <Fit key={n} w={w}>{n}</Fit>)}
      </div>
      <div className="flex h-[22px] text-[#707577]">
        <div className="z-10 -mb-px flex w-14 rounded-t-[6px] border border-b-0 border-[#a3a3a3] bg-white pl-[7px] pt-[2px] text-black"><Fit w={38}>Params</Fit></div>
        <div className="flex flex-1 rounded-bl-[6px] border-b border-[#999] pt-[5px]">
          {tabs.map(([n, w, m]) => <Fit key={n} w={w} className={m}>{n}</Fit>)}
        </div>
      </div>
      <Ribbon />
      <div className="h-[269px] shrink-0 border-l-2 border-t-2 border-[#777]">
        <Toolbar />
        <Canvas />
      </div>
      <div className="flex h-6 shrink-0 items-center border-t-2 border-white bg-linear-to-r from-[#f0f0f0] to-[#f8f8f8] pl-[3px]">
        <div className="flex size-4 items-center justify-center rounded-full border border-[#0a2859] bg-[#1662b2] font-bold text-white">!</div>
        <Fit w={177} className="ml-[3px]">Autosave complete (10 seconds ago)</Fit>
      </div>
      <div className="flex h-[3px] shrink-0 bg-[#555b68]">
        <div className="ml-[51px] h-0.5 w-[38px] bg-[#9f4325]" /><div className="ml-[114px] h-0.5 w-9 bg-[#a6a6ac]" />
        <div className="ml-[42px] h-0.5 w-14 bg-[#302f38]" /><div className="ml-[98px] h-0.5 w-8 bg-[#aaa]" /><div className="ml-11 h-0.5 w-9 bg-[#4d232d]" />
        <div className="ml-[63px] h-0.5 w-8 bg-[#850b3b]" /><div className="ml-[53px] h-0.5 w-3 bg-[#aaa]" /><div className="ml-[125px] h-0.5 w-[45px] bg-[#999]" />
      </div>
      <div className="flex min-h-0 flex-1 font-['Open_Sans','Noto_Sans',sans-serif] shadow-[inset_0_3px_5px_-2px_#888]">
        <OldWindow />
        <DesktopGap />
        <NewWindow />
      </div>
    </div>
  );
}
